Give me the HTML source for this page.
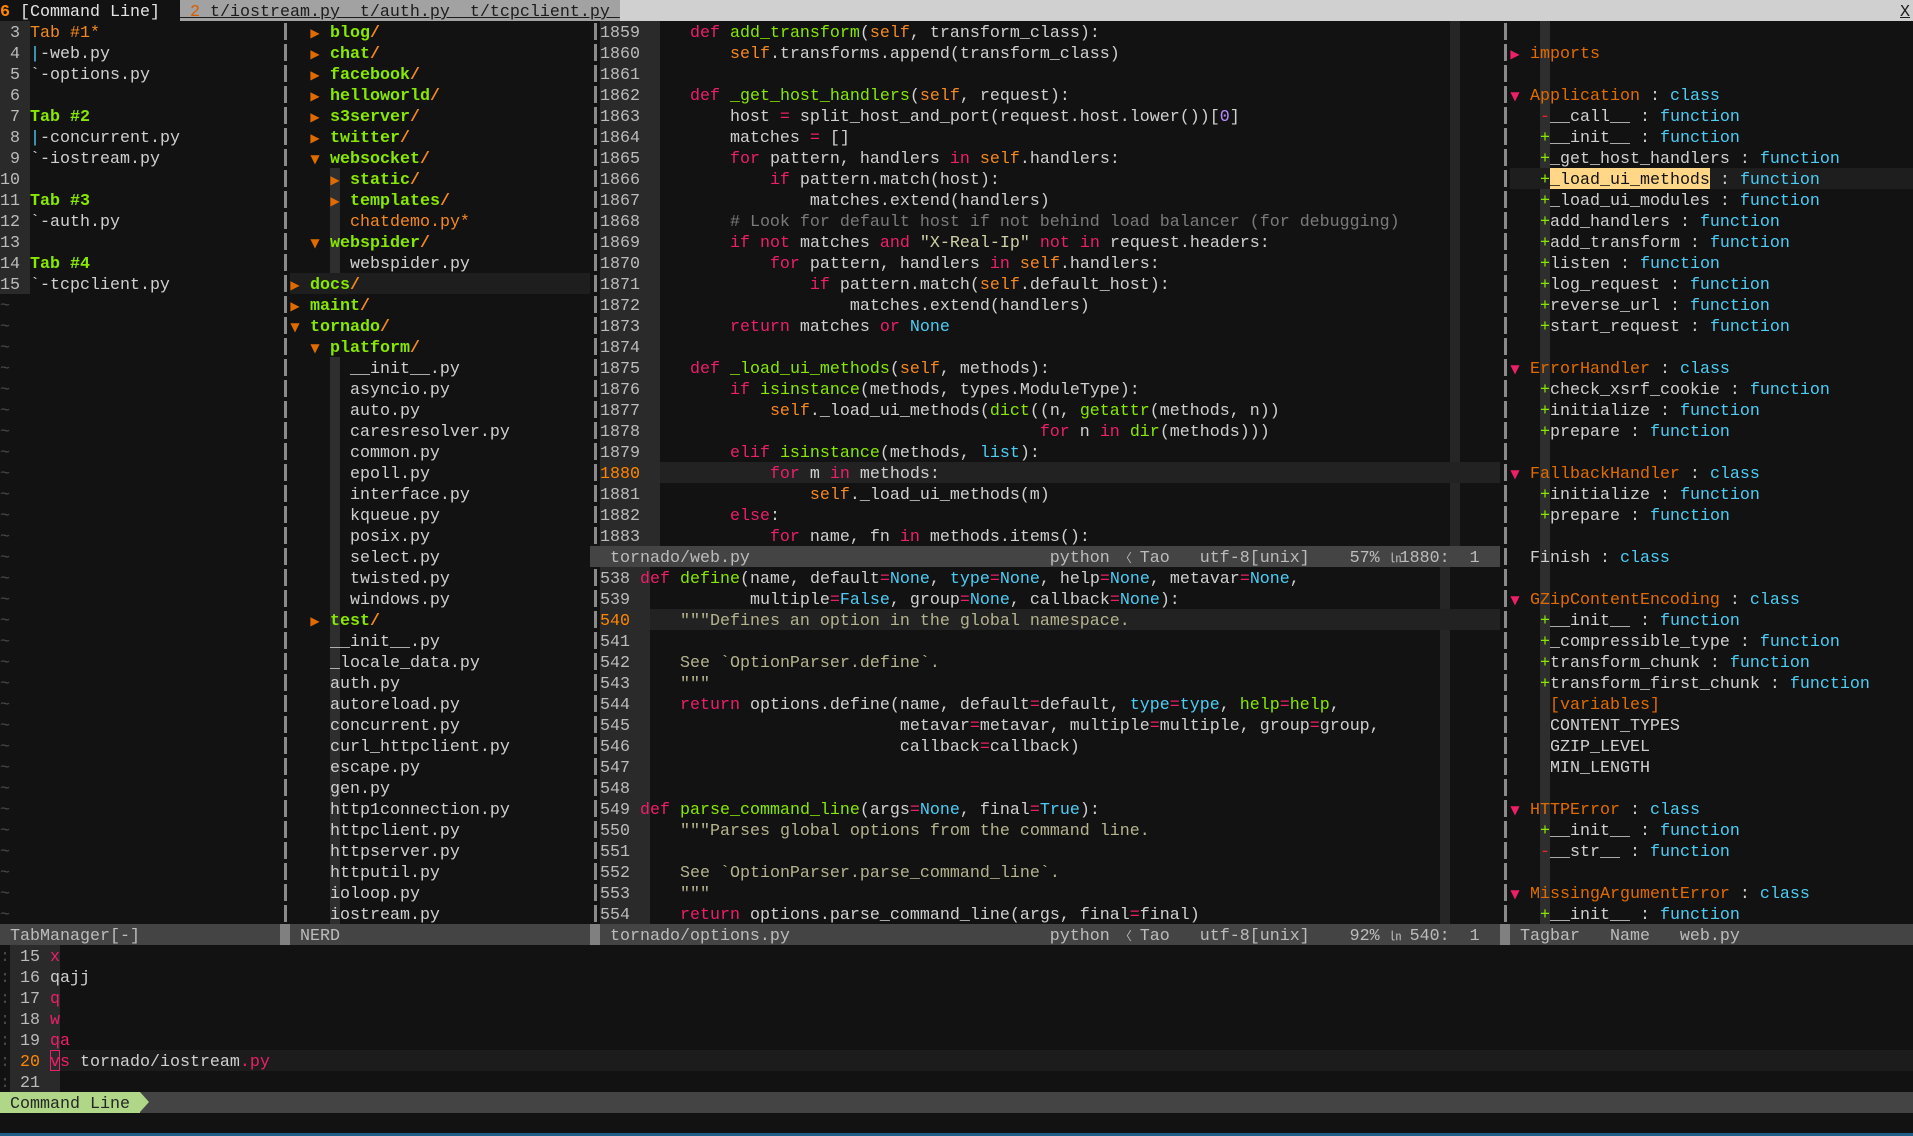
<!DOCTYPE html>
<html><head><meta charset="utf-8"><style>
*{margin:0;padding:0}
body{width:1913px;height:1136px;background:#121212;overflow:hidden;position:relative;font-family:"Liberation Mono","DejaVu Sans Mono",monospace;font-size:16.67px;color:#d0d0d0}
pre{position:absolute;font:inherit;line-height:21px;white-space:pre;padding-top:2px}
.a{position:absolute}
.k{color:#ec1f68}.g{color:#87e800}.c{color:#4ccdf5}.o{color:#f5891e}.s{color:#cfcfa8}.d{color:#b5b38e}.m{color:#7a7a7a}.p{color:#b48cff}.n{color:#bcbcbc}.r{color:#e82828}.gb{color:#87e800;font-weight:bold}.ln{color:#ff8700}
.t{display:inline-block;width:10px;text-align:center;font-family:"DejaVu Sans",sans-serif;font-size:12px}
.to{color:#e06c00}.tp{color:#ec1f68}
.sep{position:absolute;width:3px;background:repeating-linear-gradient(to bottom,transparent 0,transparent 2px,#8a8a8a 2px,#8a8a8a 19px,transparent 19px,transparent 21px)}
.til{color:#4a4a4a}
</style></head><body>
<!-- tabline -->
<div class="a" style="left:0;top:0;width:1913px;height:21px;background:#d0d0d0"></div>
<div class="a" style="left:0;top:0;width:180px;height:21px;background:#121212"></div>
<div class="a" style="left:180px;top:0;width:440px;height:21px;background:#a2a2a2"></div>
<pre style="left:0;top:0"><span style="color:#ff8700;font-weight:bold">6</span> <span style="color:#e4e4e4">[Command Line]</span></pre>
<pre style="left:180px;top:0;color:#1c1c1c;text-decoration:underline"> <span style="color:#d75f00">2</span> t/iostream.py  t/auth.py  t/tcpclient.py </pre>
<pre style="left:1900px;top:0;color:#1c1c1c;text-decoration:underline">X</pre>

<!-- left pane -->
<div class="a" style="left:0;top:21px;width:30px;height:273px;background:#2a2a2a"></div>
<pre style="left:0;top:21px"><span class="n"> 3</span> <span class="o">Tab #1*</span>
<span class="n"> 4</span> <span class="c">|</span>-web.py
<span class="n"> 5</span> `-options.py
<span class="n"> 6</span>
<span class="n"> 7</span> <span class="gb">Tab #2</span>
<span class="n"> 8</span> <span class="c">|</span>-concurrent.py
<span class="n"> 9</span> `-iostream.py
<span class="n">10</span>
<span class="n">11</span> <span class="gb">Tab #3</span>
<span class="n">12</span> `-auth.py
<span class="n">13</span>
<span class="n">14</span> <span class="gb">Tab #4</span>
<span class="n">15</span> `-tcpclient.py
<span class="til">~
~
~
~
~
~
~
~
~
~
~
~
~
~
~
~
~
~
~
~
~
~
~
~
~
~
~
~
~
~</span></pre>
<div class="sep" style="left:284px;top:21px;height:903px"></div>

<!-- NERD -->
<div class="a" style="left:290px;top:273px;width:300px;height:21px;background:#1e1e1e"></div>
<div class="a" style="left:330px;top:168px;width:10px;height:105px;background:#2e2e2e"></div>
<div class="a" style="left:330px;top:357px;width:10px;height:567px;background:#2e2e2e"></div>
<pre style="left:290px;top:21px;font-weight:bold">  <span class="t to">▶</span> <span class="g">blog</span><span class="o">/</span>
  <span class="t to">▶</span> <span class="g">chat</span><span class="o">/</span>
  <span class="t to">▶</span> <span class="g">facebook</span><span class="o">/</span>
  <span class="t to">▶</span> <span class="g">helloworld</span><span class="o">/</span>
  <span class="t to">▶</span> <span class="g">s3server</span><span class="o">/</span>
  <span class="t to">▶</span> <span class="g">twitter</span><span class="o">/</span>
  <span class="t to">▼</span> <span class="g">websocket</span><span class="o">/</span>
    <span class="t to">▶</span> <span class="g">static</span><span class="o">/</span>
    <span class="t to">▶</span> <span class="g">templates</span><span class="o">/</span>
      <span class="o" style="font-weight:normal">chatdemo.py*</span>
  <span class="t to">▼</span> <span class="g">webspider</span><span class="o">/</span>
      <span style="font-weight:normal">webspider.py</span>
<span class="t to">▶</span> <span class="g">docs</span><span class="o">/</span>
<span class="t to">▶</span> <span class="g">maint</span><span class="o">/</span>
<span class="t to">▼</span> <span class="g">tornado</span><span class="o">/</span>
  <span class="t to">▼</span> <span class="g">platform</span><span class="o">/</span>
<span style="font-weight:normal">      __init__.py
      asyncio.py
      auto.py
      caresresolver.py
      common.py
      epoll.py
      interface.py
      kqueue.py
      posix.py
      select.py
      twisted.py
      windows.py</span>
  <span class="t to">▶</span> <span class="g">test</span><span class="o">/</span>
<span style="font-weight:normal">    __init__.py
    _locale_data.py
    auth.py
    autoreload.py
    concurrent.py
    curl_httpclient.py
    escape.py
    gen.py
    http1connection.py
    httpclient.py
    httpserver.py
    httputil.py
    ioloop.py
    iostream.py</span></pre>
<div class="sep" style="left:594px;top:21px;height:903px"></div>

<!-- main top -->
<div class="a" style="left:600px;top:21px;width:60px;height:525px;background:#2a2a2a"></div>
<div class="a" style="left:1450px;top:21px;width:10px;height:525px;background:#262626"></div>
<div class="a" style="left:660px;top:462px;width:840px;height:21px;background:#222"></div>
<pre style="left:600px;top:21px"><span class="n">1859</span>     <span class="k">def</span> <span class="g">add_transform</span>(<span class="o">self</span>, transform_class):
<span class="n">1860</span>         <span class="o">self</span>.transforms.append(transform_class)
<span class="n">1861</span>
<span class="n">1862</span>     <span class="k">def</span> <span class="g">_get_host_handlers</span>(<span class="o">self</span>, request):
<span class="n">1863</span>         host <span class="k">=</span> split_host_and_port(request.host.lower())[<span class="p">0</span>]
<span class="n">1864</span>         matches <span class="k">=</span> []
<span class="n">1865</span>         <span class="k">for</span> pattern, handlers <span class="k">in</span> <span class="o">self</span>.handlers:
<span class="n">1866</span>             <span class="k">if</span> pattern.match(host):
<span class="n">1867</span>                 matches.extend(handlers)
<span class="n">1868</span>         <span class="m"># Look for default host if not behind load balancer (for debugging)</span>
<span class="n">1869</span>         <span class="k">if</span> <span class="k">not</span> matches <span class="k">and</span> <span class="s">"X-Real-Ip"</span> <span class="k">not</span> <span class="k">in</span> request.headers:
<span class="n">1870</span>             <span class="k">for</span> pattern, handlers <span class="k">in</span> <span class="o">self</span>.handlers:
<span class="n">1871</span>                 <span class="k">if</span> pattern.match(<span class="o">self</span>.default_host):
<span class="n">1872</span>                     matches.extend(handlers)
<span class="n">1873</span>         <span class="k">return</span> matches <span class="k">or</span> <span class="c">None</span>
<span class="n">1874</span>
<span class="n">1875</span>     <span class="k">def</span> <span class="g">_load_ui_methods</span>(<span class="o">self</span>, methods):
<span class="n">1876</span>         <span class="k">if</span> <span class="g">isinstance</span>(methods, types.ModuleType):
<span class="n">1877</span>             <span class="o">self</span>._load_ui_methods(<span class="g">dict</span>((n, <span class="g">getattr</span>(methods, n))
<span class="n">1878</span>                                        <span class="k">for</span> n <span class="k">in</span> <span class="g">dir</span>(methods)))
<span class="n">1879</span>         <span class="k">elif</span> <span class="g">isinstance</span>(methods, <span class="c">list</span>):
<span class="ln">1880</span>             <span class="k">for</span> m <span class="k">in</span> methods:
<span class="n">1881</span>                 <span class="o">self</span>._load_ui_methods(m)
<span class="n">1882</span>         <span class="k">else</span>:
<span class="n">1883</span>             <span class="k">for</span> name, fn <span class="k">in</span> methods.items():</pre>
<div class="a" style="left:590px;top:546px;width:910px;height:21px;background:#444"></div>
<pre style="left:600px;top:546px;color:#bcbcbc"> tornado/web.py                              python <span class="t">〈</span> Tao   utf-8[unix]    57% <span class="t">㏑</span>1880:  1</pre>

<!-- main bottom -->
<div class="a" style="left:600px;top:567px;width:50px;height:357px;background:#2a2a2a"></div>
<div class="a" style="left:1440px;top:567px;width:10px;height:357px;background:#262626"></div>
<div class="a" style="left:650px;top:609px;width:850px;height:21px;background:#222"></div>
<pre style="left:600px;top:567px"><span class="n">538</span> <span class="k">def</span> <span class="g">define</span>(name, default<span class="k">=</span><span class="c">None</span>, <span class="c">type</span><span class="k">=</span><span class="c">None</span>, help<span class="k">=</span><span class="c">None</span>, metavar<span class="k">=</span><span class="c">None</span>,
<span class="n">539</span>            multiple<span class="k">=</span><span class="c">False</span>, group<span class="k">=</span><span class="c">None</span>, callback<span class="k">=</span><span class="c">None</span>):
<span class="ln">540</span>     <span class="d">"""Defines an option in the global namespace.</span>
<span class="n">541</span>
<span class="n">542</span>     <span class="d">See `OptionParser.define`.</span>
<span class="n">543</span>     <span class="d">"""</span>
<span class="n">544</span>     <span class="k">return</span> options.define(name, default<span class="k">=</span>default, <span class="c">type</span><span class="k">=</span><span class="c">type</span>, <span class="g">help</span><span class="k">=</span><span class="g">help</span>,
<span class="n">545</span>                           metavar<span class="k">=</span>metavar, multiple<span class="k">=</span>multiple, group<span class="k">=</span>group,
<span class="n">546</span>                           callback<span class="k">=</span>callback)
<span class="n">547</span>
<span class="n">548</span>
<span class="n">549</span> <span class="k">def</span> <span class="g">parse_command_line</span>(args<span class="k">=</span><span class="c">None</span>, final<span class="k">=</span><span class="c">True</span>):
<span class="n">550</span>     <span class="d">"""Parses global options from the command line.</span>
<span class="n">551</span>
<span class="n">552</span>     <span class="d">See `OptionParser.parse_command_line`.</span>
<span class="n">553</span>     <span class="d">"""</span>
<span class="n">554</span>     <span class="k">return</span> options.parse_command_line(args, final<span class="k">=</span>final)</pre>
<div class="sep" style="left:1504px;top:21px;height:903px"></div>

<!-- tagbar -->
<div class="a" style="left:1540px;top:21px;width:10px;height:903px;background:#2e2e2e"></div>
<div class="a" style="left:1510px;top:168px;width:403px;height:21px;background:#1e1e1e"></div>
<div class="a" style="left:1550px;top:168px;width:160px;height:21px;background:#ffd787"></div>
<pre style="left:1510px;top:42px"><span class="t tp">▶</span> <span class="to">imports</span>

<span class="t tp">▼</span> <span class="to">Application</span> : <span class="c">class</span>
   <span class="r">-</span>__call__ : <span class="c">function</span>
   <span class="g">+</span>__init__ : <span class="c">function</span>
   <span class="g">+</span>_get_host_handlers : <span class="c">function</span>
   <span class="g">+</span><span style="color:#121212">_load_ui_methods</span> : <span class="c">function</span>
   <span class="g">+</span>_load_ui_modules : <span class="c">function</span>
   <span class="g">+</span>add_handlers : <span class="c">function</span>
   <span class="g">+</span>add_transform : <span class="c">function</span>
   <span class="g">+</span>listen : <span class="c">function</span>
   <span class="g">+</span>log_request : <span class="c">function</span>
   <span class="g">+</span>reverse_url : <span class="c">function</span>
   <span class="g">+</span>start_request : <span class="c">function</span>

<span class="t tp">▼</span> <span class="to">ErrorHandler</span> : <span class="c">class</span>
   <span class="g">+</span>check_xsrf_cookie : <span class="c">function</span>
   <span class="g">+</span>initialize : <span class="c">function</span>
   <span class="g">+</span>prepare : <span class="c">function</span>

<span class="t tp">▼</span> <span class="to">FallbackHandler</span> : <span class="c">class</span>
   <span class="g">+</span>initialize : <span class="c">function</span>
   <span class="g">+</span>prepare : <span class="c">function</span>

  Finish : <span class="c">class</span>

<span class="t tp">▼</span> <span class="to">GZipContentEncoding</span> : <span class="c">class</span>
   <span class="g">+</span>__init__ : <span class="c">function</span>
   <span class="g">+</span>_compressible_type : <span class="c">function</span>
   <span class="g">+</span>transform_chunk : <span class="c">function</span>
   <span class="g">+</span>transform_first_chunk : <span class="c">function</span>
    <span class="to">[variables]</span>
    CONTENT_TYPES
    GZIP_LEVEL
    MIN_LENGTH

<span class="t tp">▼</span> <span class="to">HTTPError</span> : <span class="c">class</span>
   <span class="g">+</span>__init__ : <span class="c">function</span>
   <span class="r">-</span>__str__ : <span class="c">function</span>

<span class="t tp">▼</span> <span class="to">MissingArgumentError</span> : <span class="c">class</span>
   <span class="g">+</span>__init__ : <span class="c">function</span></pre>

<!-- status row 44 -->
<div class="a" style="left:0;top:924px;width:1913px;height:21px;background:#444"></div>
<div class="a" style="left:280px;top:924px;width:10px;height:21px;background:#808080"></div>
<div class="a" style="left:590px;top:924px;width:10px;height:21px;background:#808080"></div>
<div class="a" style="left:1500px;top:924px;width:10px;height:21px;background:#808080"></div>
<pre style="left:0;top:924px;color:#bcbcbc"> TabManager[-]</pre>
<pre style="left:290px;top:924px;color:#bcbcbc"> NERD</pre>
<pre style="left:600px;top:924px;color:#bcbcbc"> tornado/options.py                          python <span class="t">〈</span> Tao   utf-8[unix]    92% <span class="t">㏑</span> 540:  1</pre>
<pre style="left:1510px;top:924px;color:#bcbcbc"> Tagbar   Name   web.py</pre>

<!-- command window -->
<div class="a" style="left:10px;top:945px;width:50px;height:147px;background:#2a2a2a"></div>
<div class="a" style="left:60px;top:1050px;width:1853px;height:21px;background:#1c1c1c"></div>
<div class="a" style="left:50px;top:1050px;width:10px;height:21px;box-sizing:border-box;border:1px solid #ec1f68"></div>
<pre style="left:0;top:945px"><span class="til">:</span> <span class="n">15</span> <span class="k">x</span>
<span class="til">:</span> <span class="n">16</span> qajj
<span class="til">:</span> <span class="n">17</span> <span class="k">q</span>
<span class="til">:</span> <span class="n">18</span> <span class="k">w</span>
<span class="til">:</span> <span class="n">19</span> <span class="k">qa</span>
<span class="til">:</span> <span class="ln">20</span> <span class="k">vs</span> tornado/iostream<span class="k">.py</span>
<span class="til">:</span> <span class="n">21</span></pre>
<div class="a" style="left:0;top:1092px;width:1913px;height:21px;background:#444"></div>
<div class="a" style="left:0;top:1092px;width:140px;height:21px;background:#afd787"></div>
<div class="a" style="left:140px;top:1092px;width:0;height:0;border-top:10.5px solid transparent;border-bottom:10.5px solid transparent;border-left:9px solid #afd787"></div>
<pre style="left:0;top:1092px;color:#262626"> Command Line</pre>
<div class="a" style="left:0;top:1133px;width:1913px;height:3px;background:#1f5f87"></div>
</body></html>
